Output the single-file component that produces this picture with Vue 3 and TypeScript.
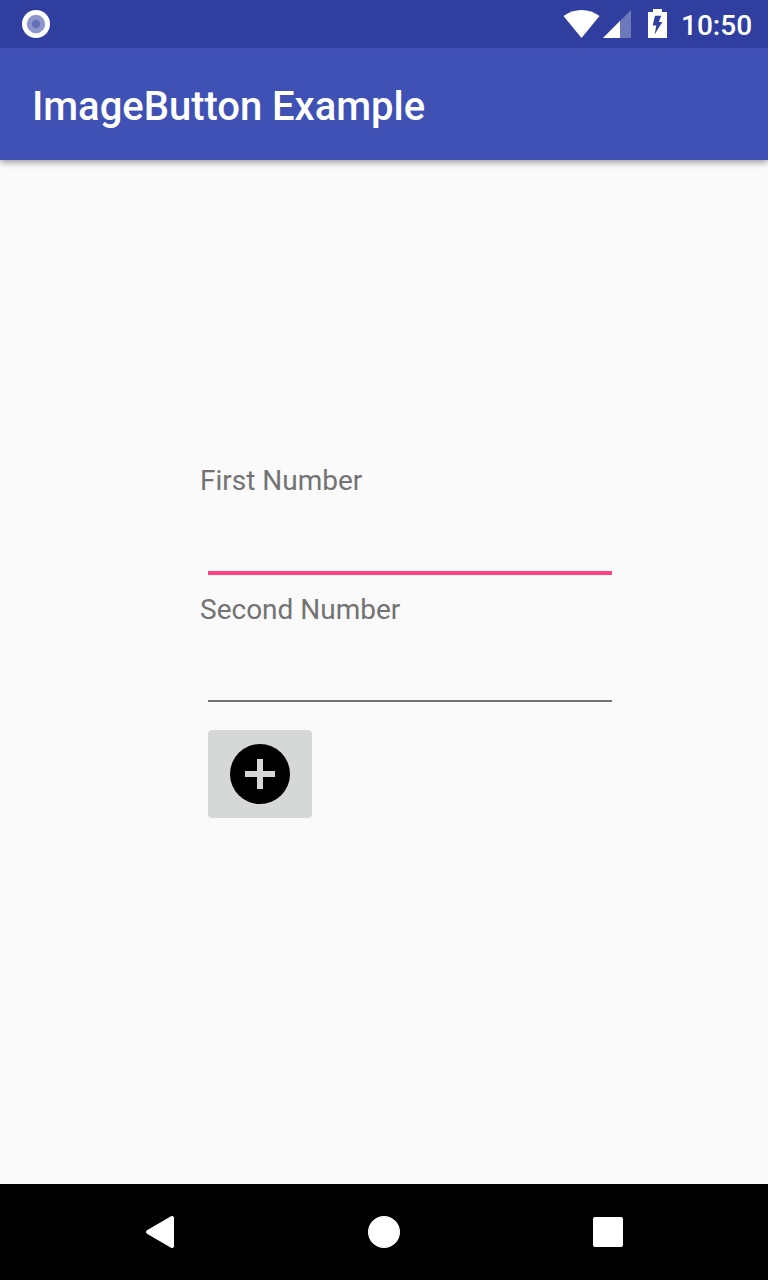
<script setup lang="ts">
import { ref } from 'vue'

interface Field {
  id: string
  label: string
}

const fields: Field[] = [
  { id: 'first', label: 'First Number' },
  { id: 'second', label: 'Second Number' },
]
const values = ref<Record<string, string>>({ first: '', second: '' })
const active = ref('first')
</script>

<template>
  <div class="screen">
    <header class="status-bar">
      <svg class="notice" width="28" height="28" viewBox="0 0 28 28">
        <circle cx="14" cy="14" r="14" fill="#fff" />
        <circle cx="14" cy="14" r="9.2" fill="#8d96cd" />
        <circle cx="14" cy="14" r="4.2" fill="#6670b8" />
      </svg>
      <svg class="indicators" width="105" height="48" viewBox="0 0 105 48">
        <path d="M.5 16Q8.5 10 18.5 10T36.5 16L18.5 38Z" fill="#fff" />
        <path d="M40 38L68 10V38Z" fill="#fff" fill-opacity=".3" />
        <path d="M40 38L57 21V38Z" fill="#fff" />
        <path
          d="M90 9h9v3h5v26H85V12h5ZM92 15.7L89.7 25.5H93.3L91.6 34.5L99.3 22H95.8L98.2 15.7Z"
          fill="#fff"
          fill-rule="evenodd"
        />
      </svg>
      <span class="clock">10:50</span>
    </header>

    <div class="app-bar">
      <h1>ImageButton Example</h1>
    </div>

    <main class="form">
      <div v-for="field in fields" :key="field.id" class="field">
        <label :for="field.id">{{ field.label }}</label>
        <input
          :id="field.id"
          v-model="values[field.id]"
          :class="{ active: active === field.id }"
          type="text"
          autocomplete="off"
          @focus="active = field.id"
        />
      </div>
      <button class="add" type="button" aria-label="Add">
        <svg width="60" height="60" viewBox="0 0 60 60">
          <circle cx="30" cy="30" r="30" />
          <path d="M27 15h6v12h12v6H33v12h-6V33H15v-6h12Z" fill="#d6d7d7" />
        </svg>
      </button>
    </main>

    <nav class="nav-bar">
      <svg width="224" height="96" viewBox="0 0 224 96">
        <path d="M100 48L124 34V62Z" class="back" />
      </svg>
      <svg width="224" height="96" viewBox="0 0 224 96">
        <circle cx="112" cy="48" r="16" fill="#fff" />
      </svg>
      <svg width="224" height="96" viewBox="0 0 224 96">
        <rect x="97" y="33" width="30" height="30" rx="2" fill="#fff" />
      </svg>
    </nav>
  </div>
</template>

<style>
body {
  margin: 0;
}
</style>

<style scoped>
.screen {
  display: flex;
  flex-direction: column;
  width: 768px;
  height: 1280px;
  overflow: hidden;
  background: #fafafa;
  font-family: Roboto, sans-serif;
}
.status-bar {
  position: relative;
  z-index: 1;
  display: flex;
  align-items: center;
  height: 48px;
  flex: none;
  box-sizing: border-box;
  padding: 0 16px 0 22px;
  background: #303f9f;
  color: #fff;
}
.indicators {
  margin-left: auto;
}
.clock {
  width: 71px;
  margin-left: 13px;
  padding-top: 3px;
  font-size: 28px;
  font-weight: 500;
  line-height: 36px;
}
.app-bar {
  display: flex;
  align-items: center;
  height: 112px;
  flex: none;
  box-sizing: border-box;
  padding: 6px 32px 0;
  background: #3f51b5;
  color: #fff;
  box-shadow: 0 2px 7px rgba(0, 0, 0, 0.42);
}
h1 {
  margin: 0;
  font-size: 40px;
  font-weight: 500;
  line-height: 48px;
  letter-spacing: -0.03px;
}
.form {
  flex: 1;
  padding: 302px 0 0 200px;
}
.field {
  display: flex;
  flex-direction: column;
  height: 129px;
}
label {
  height: 38px;
  font-size: 28px;
  line-height: 38px;
  color: #737373;
}
input {
  width: 404px;
  height: 73px;
  box-sizing: border-box;
  margin: 0 0 0 8px;
  padding: 0;
  border: 0;
  border-bottom: 2px solid #737373;
  border-radius: 0;
  outline: 0;
  background: transparent;
  font: 36px Roboto, sans-serif;
}
input.active {
  height: 75px;
  border-bottom: 4px solid #ff4081;
}
.add {
  display: flex;
  align-items: center;
  justify-content: center;
  width: 104px;
  height: 88px;
  margin: 10px 0 0 8px;
  padding: 0;
  border: 0;
  border-radius: 4px;
  background: #d6d7d7;
}
.nav-bar {
  display: flex;
  justify-content: center;
  height: 96px;
  flex: none;
  background: #000;
}
.back {
  fill: #fff;
  stroke: #fff;
  stroke-width: 4px;
  stroke-linejoin: round;
}
</style>
